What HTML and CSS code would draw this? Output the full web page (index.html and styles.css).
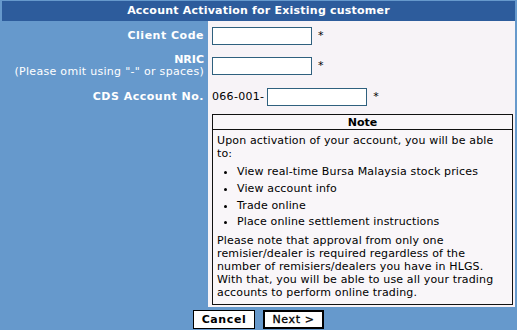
FILE: index.html
```html
<!DOCTYPE html>
<html>
<head>
<meta charset="utf-8">
<link rel="stylesheet" href="styles.css">
</head>
<body>
<div class="panel">
  <div class="title">Account Activation for Existing customer</div>
  <div class="form">
    <div class="label row1">Client Code</div>
    <div class="field row1"><input class="txt" type="text"><span class="req">*</span></div>

    <div class="label row2"><span class="strong">NRIC</span><span class="hint">(Please omit using "-" or spaces)</span></div>
    <div class="field row2"><input class="txt" type="text"><span class="req">*</span></div>

    <div class="label row3">CDS Account No.</div>
    <div class="field row3"><span class="prefix">066-001-</span><input class="txt" type="text"><span class="req">*</span></div>

    <div class="label row4"></div>
    <div class="field row4">
      <div class="note">
        <div class="note-head">Note</div>
        <div class="note-body">
          <p class="lead">Upon activation of your account, you will be able to:</p>
          <ul class="perks">
            <li>View real-time Bursa Malaysia stock prices</li>
            <li>View account info</li>
            <li>Trade online</li>
            <li>Place online settlement instructions</li>
          </ul>
          <p class="tail">Please note that approval from only one remisier/dealer is required regardless of the number of remisiers/dealers you have in HLGS. With that, you will be able to use all your trading accounts to perform online trading.</p>
        </div>
      </div>
    </div>
  </div>
  <div class="actions">
    <button class="btn" type="button">Cancel</button>
    <button class="btn primary" type="button">Next &gt;</button>
  </div>
</div>
</body>
</html>
```

FILE: styles.css
```css
* { box-sizing: border-box; }
html, body { margin: 0; padding: 0; background: #ffffff; }
body {
  font-family: "DejaVu Sans", sans-serif;
  font-size: 11px;
  color: #000;
}
.panel {
  width: 517px;
  height: 330px;
  background: #6699cc;
  padding: 1px 2px 0 2px;
}
.title {
  height: 20px;
  line-height: 20px;
  background: #2d5c9c;
  color: #fff;
  font-weight: bold;
  font-size: 11px;
  letter-spacing: 0.22px;
  text-align: center;
}
.form {
  display: grid;
  grid-template-columns: 206px 307px;
}
.label {
  background: #6699cc;
  color: #fff;
  font-weight: bold;
  letter-spacing: 0.5px;
  text-align: right;
  padding-right: 4px;
  display: flex;
  flex-direction: column;
  justify-content: center;
  align-items: flex-end;
}
.label .hint { font-weight: normal; letter-spacing: 0.3px; line-height: 12px; }
.label .strong { line-height: 13px; letter-spacing: 0; }
.field {
  background: #f7f3f7;
  padding-left: 4px;
  display: flex;
  align-items: center;
}
.row1 { height: 29px; }
.row2 { height: 30px; }
.row3 { height: 31px; }
.field.row2 { padding-top: 1px; }
.field.row3 { padding-top: 2px; }
.label.row3 { padding-top: 2px; }
.txt {
  width: 100px;
  height: 18px;
  border: 1px solid #2f607e;
  background: #fff;
  margin: 0;
  padding: 0 2px;
  font: inherit;
}
.req { margin-left: 6px; }
.prefix { margin-right: 3px; letter-spacing: 0.3px; }
.field.row4 {
  padding: 3px 2px 2px 4px;
  display: block;
}
.note {
  border: 1px solid #111;
  background: #f9f6f9;
  height: 191px;
}
.note-head {
  text-align: center;
  font-weight: bold;
  height: 15px;
  line-height: 15px;
  border-bottom: 1px solid #111;
}
.note-body {
  padding: 4px 16px 0 4px;
  line-height: 13px;
  letter-spacing: 0.14px;
}
.note-body p { margin: 0; }
.perks {
  margin: 4px 0 3px 0;
  padding-left: 20px;
  line-height: 16.8px;
}
.actions {
  height: 24px;
  display: flex;
  justify-content: center;
  align-items: center;
  gap: 8px;
  padding-top: 1px;
}
.btn {
  height: 19px;
  width: 62px;
  margin: 0;
  padding: 0;
  background: #fff;
  border: 1px solid #000;
  font-family: inherit;
  font-size: 11px;
  font-weight: bold;
  letter-spacing: 0.6px;
  color: #000;
}
.btn.primary {
  width: 61px;
  border: 2px solid #000;
  font-weight: normal;
  -webkit-text-stroke: 0.3px #000;
}
```
